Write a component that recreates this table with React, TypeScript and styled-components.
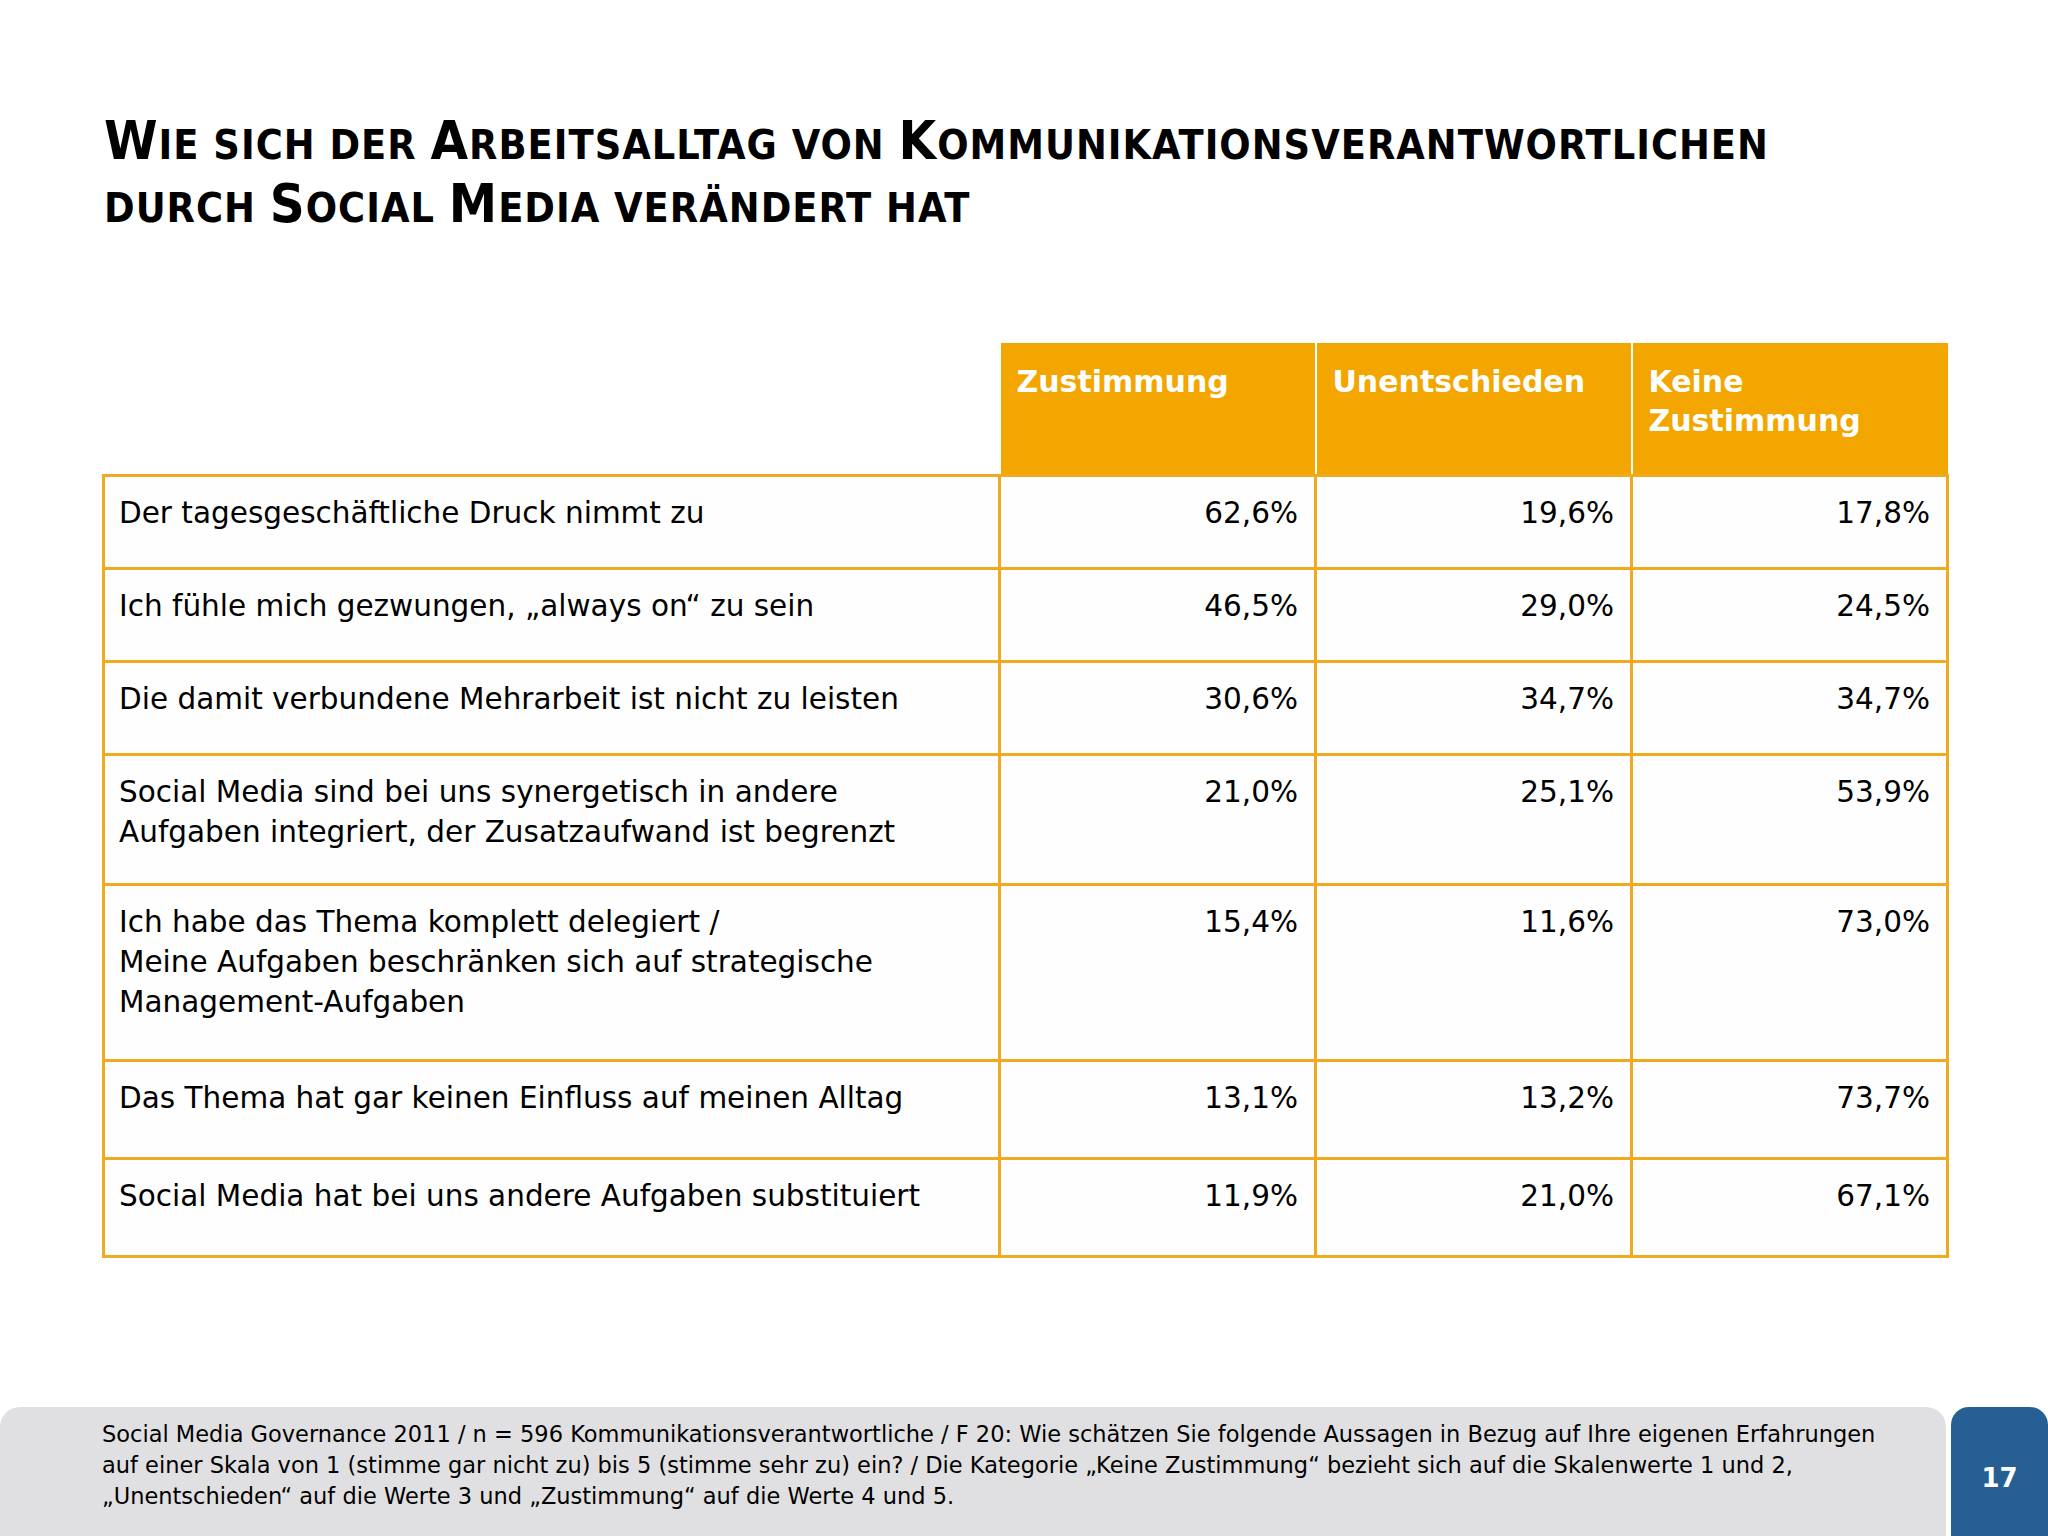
import React from 'react';
import styled, { createGlobalStyle } from 'styled-components';

const GlobalStyle = createGlobalStyle`
  html, body {
    margin: 0;
    padding: 0;
    background: #ffffff;
  }
  body {
    font-family: "DejaVu Sans", "Liberation Sans", sans-serif;
    color: #000;
  }
`;

const ORANGE = '#f3a600';
const LINE = '#f0aa1e';

const Page = styled.div`
  width: 2048px;
  height: 1536px;
  display: flex;
  flex-direction: column;
  overflow: hidden;
`;

const Title = styled.h1`
  margin: 0;
  padding: 114px 0 0 104px;
  font-family: "DejaVu Sans Condensed", "DejaVu Sans", sans-serif;
  font-weight: bold;
  font-size: 41px;
  line-height: 63px;
  text-transform: uppercase;
  letter-spacing: 1px;
`;

const Big = styled.span`
  font-size: 54px;
  line-height: 0;
`;

const Table = styled.table`
  margin: 103px 0 0 102px;
  border-collapse: collapse;
  table-layout: fixed;
  width: 1844px;
`;

const HeadCell = styled.th<{ $first?: boolean }>`
  height: 132px;
  padding: 19px 16px 0;
  vertical-align: top;
  text-align: left;
  font-weight: bold;
  font-size: 30px;
  line-height: 39px;
  color: #fff;
  background: ${p => (p.$first ? 'transparent' : ORANGE)};
  border-left: ${p => (p.$first ? 'none' : '2px solid #fff')};
  box-sizing: border-box;
`;

const Row = styled.tr<{ $h: number }>`
  height: ${p => p.$h}px;
`;

const Cell = styled.td<{ $num?: boolean }>`
  border: 3px solid ${LINE};
  padding: 16px 16px 0 14px;
  vertical-align: top;
  text-align: ${p => (p.$num ? 'right' : 'left')};
  font-size: 29.5px;
  line-height: 40px;
  background: #fefefe;
  white-space: pre-line;
`;

const Footer = styled.div`
  margin-top: auto;
  display: flex;
  gap: 5px;
  height: 129px;
`;

const Note = styled.div`
  width: 1946px;
  box-sizing: border-box;
  background: #e0e0e2;
  border-radius: 20px 20px 0 0;
  padding: 12px 40px 0 102px;
  font-size: 22.5px;
  line-height: 31px;
`;

const PageNo = styled.div`
  flex: 1;
  background: #265f93;
  border-radius: 18px 18px 0 0;
  display: flex;
  align-items: center;
  justify-content: center;
  color: #fff;
  font-weight: bold;
  font-size: 26px;
  padding-top: 12px;
`;

const rows = [
  { label: 'Der tagesgeschäftliche Druck nimmt zu', v: ['62,6%', '19,6%', '17,8%'], h: 93 },
  { label: 'Ich fühle mich gezwungen, „always on“ zu sein', v: ['46,5%', '29,0%', '24,5%'], h: 93 },
  { label: 'Die damit verbundene Mehrarbeit ist nicht zu leisten', v: ['30,6%', '34,7%', '34,7%'], h: 93 },
  {
    label: 'Social Media sind bei uns synergetisch in andere\nAufgaben integriert, der Zusatzaufwand ist begrenzt',
    v: ['21,0%', '25,1%', '53,9%'],
    h: 130,
  },
  {
    label: 'Ich habe das Thema komplett delegiert /\nMeine Aufgaben beschränken sich auf strategische\nManagement-Aufgaben',
    v: ['15,4%', '11,6%', '73,0%'],
    h: 176,
  },
  { label: 'Das Thema hat gar keinen Einfluss auf meinen Alltag', v: ['13,1%', '13,2%', '73,7%'], h: 98 },
  { label: 'Social Media hat bei uns andere Aufgaben substituiert', v: ['11,9%', '21,0%', '67,1%'], h: 98 },
];

export default function App() {
  return (
    <Page>
      <GlobalStyle />
      <Title>
        <Big>W</Big>ie sich der <Big>A</Big>rbeitsalltag von <Big>K</Big>ommunikationsverantwortlichen
        <br />
        durch <Big>S</Big>ocial <Big>M</Big>edia verändert hat
      </Title>

      <Table>
        <colgroup>
          <col style={{ width: 896 }} />
          <col style={{ width: 316 }} />
          <col style={{ width: 316 }} />
          <col style={{ width: 316 }} />
        </colgroup>
        <thead>
          <tr>
            <HeadCell $first />
            <HeadCell>Zustimmung</HeadCell>
            <HeadCell>Unentschieden</HeadCell>
            <HeadCell>
              Keine
              <br />
              Zustimmung
            </HeadCell>
          </tr>
        </thead>
        <tbody>
          {rows.map(r => (
            <Row key={r.label} $h={r.h}>
              <Cell>{r.label}</Cell>
              {r.v.map((x, i) => (
                <Cell key={i} $num>
                  {x}
                </Cell>
              ))}
            </Row>
          ))}
        </tbody>
      </Table>

      <Footer>
        <Note>
          Social Media Governance 2011 / n = 596 Kommunikationsverantwortliche / F 20: Wie schätzen Sie folgende Aussagen in Bezug auf Ihre eigenen Erfahrungen
          <br />
          auf einer Skala von 1 (stimme gar nicht zu) bis 5 (stimme sehr zu) ein? / Die Kategorie „Keine Zustimmung“ bezieht sich auf die Skalenwerte 1 und 2,
          <br />
          „Unentschieden“ auf die Werte 3 und „Zustimmung“ auf die Werte 4 und 5.
        </Note>
        <PageNo>17</PageNo>
      </Footer>
    </Page>
  );
}
